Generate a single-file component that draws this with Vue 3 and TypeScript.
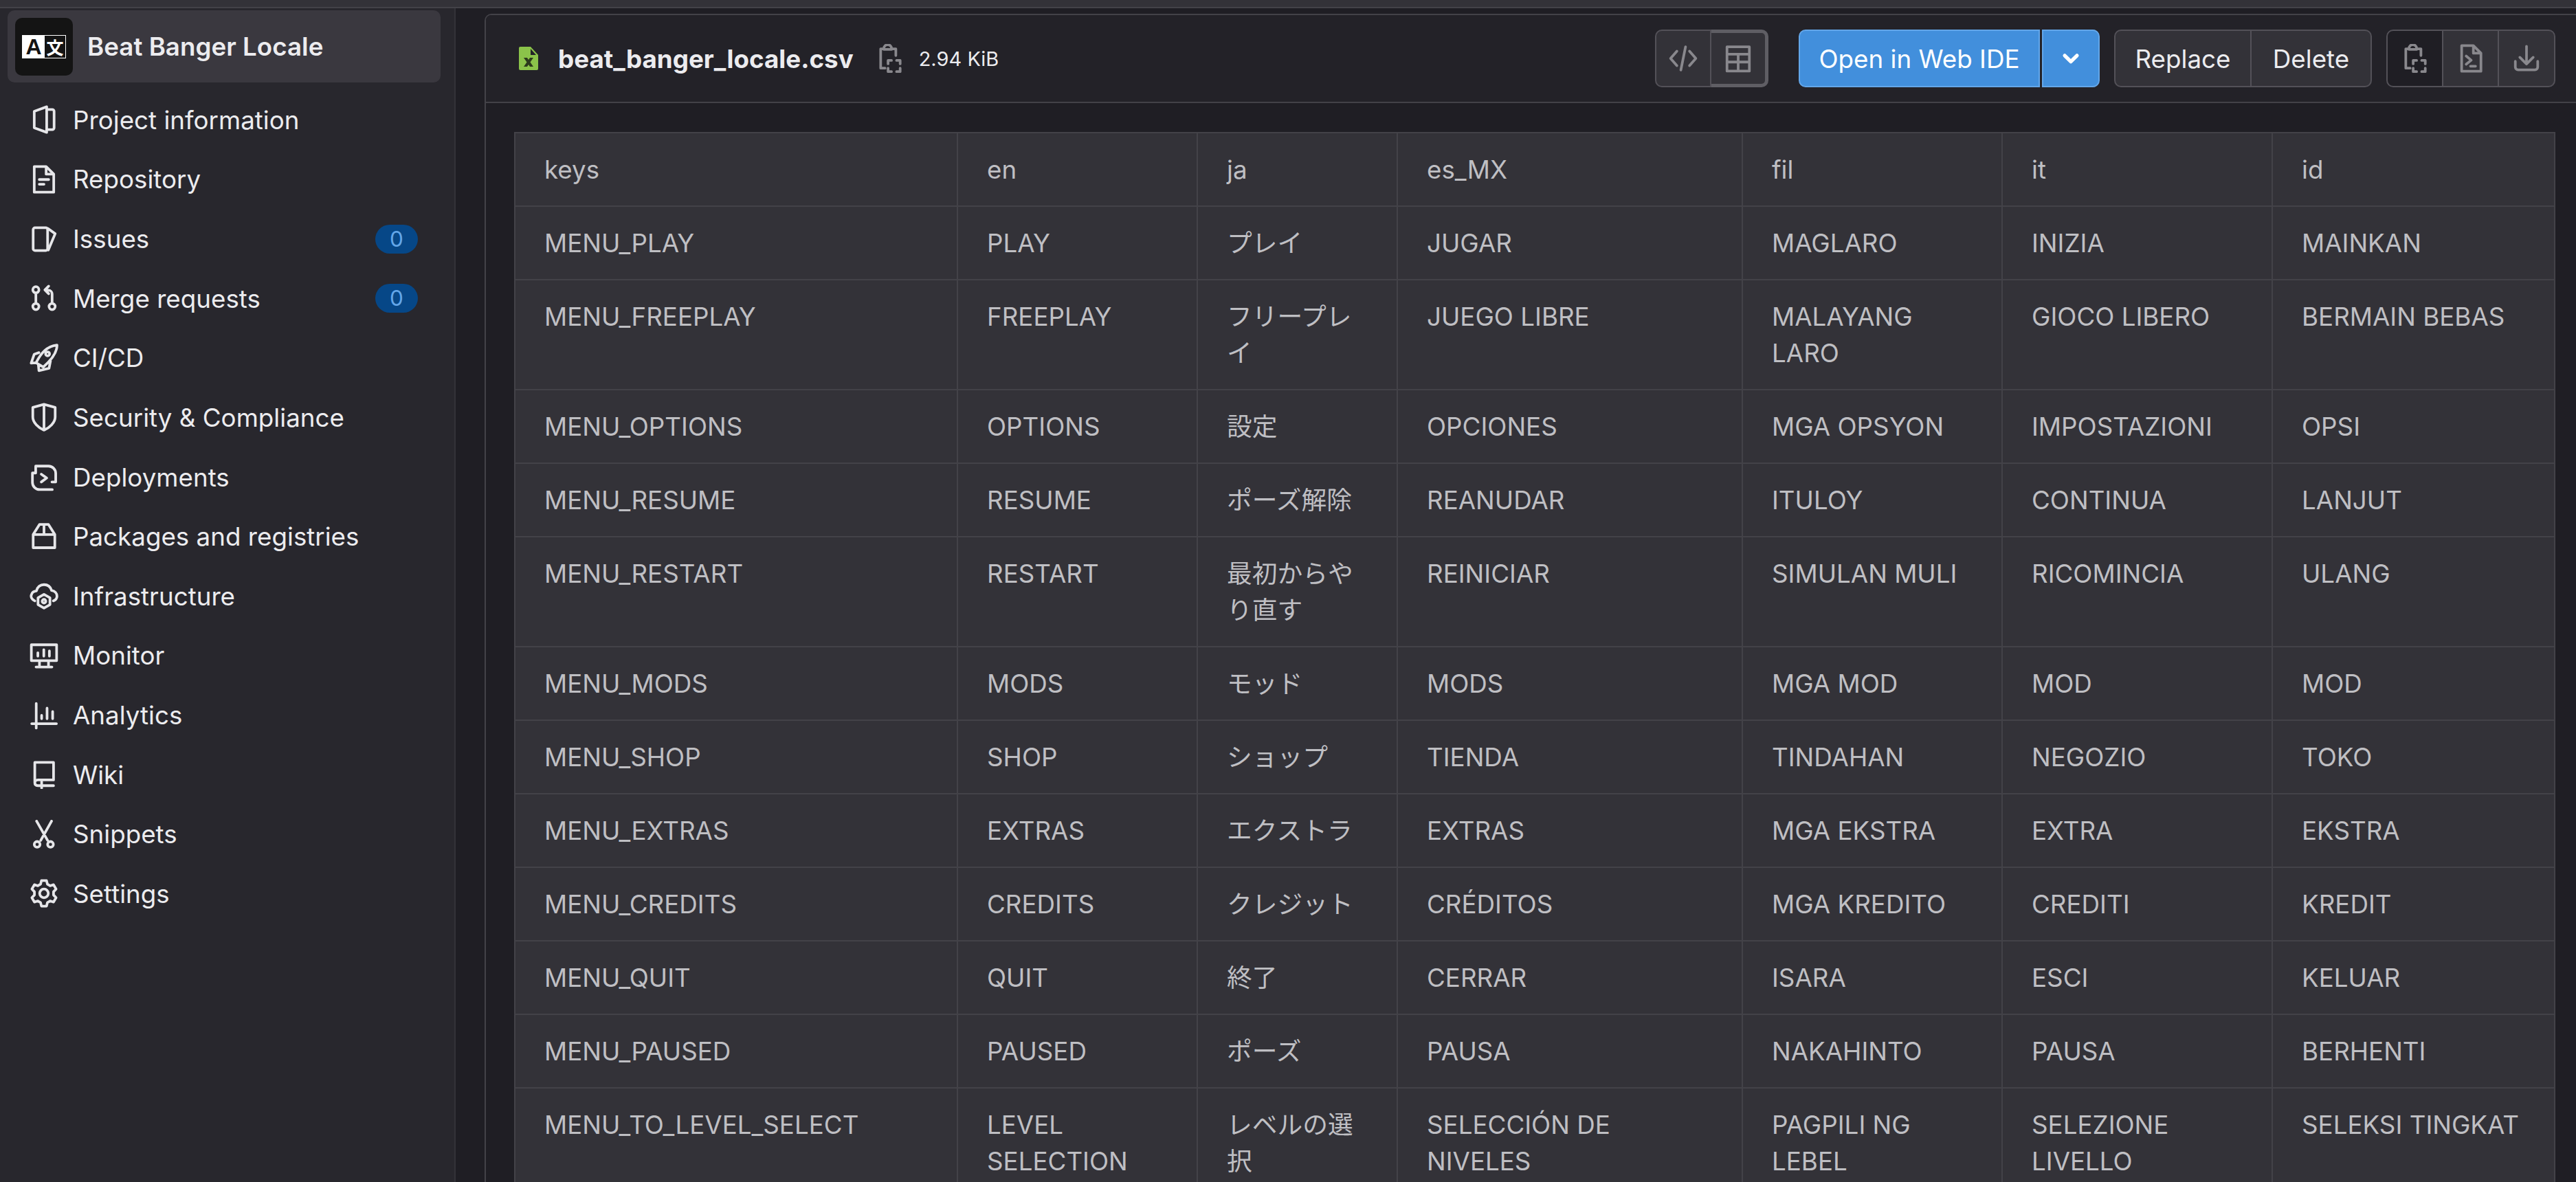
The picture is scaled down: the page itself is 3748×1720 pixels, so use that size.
<script setup lang="ts">
interface NavItem { label: string; d: string; badge?: string }

const circle = (x: number, y: number, r: number): string =>
  `M${x - r} ${y}a${r} ${r} 0 1 0 ${2 * r} 0a${r} ${r} 0 1 0 ${-2 * r} 0`

const nav: NavItem[] = [
  { label: 'Project information', d: 'M2.6 3.4L9.5.9V15.1L2.6 12.6ZM9.5 2.4H12.6a1 1 0 0 1 1 1V12.6a1 1 0 0 1-1 1H9.5' },
  { label: 'Repository', d: 'M2.6.9H9.2L13.4 5.1V15.1H2.6ZM9.2.9V5.1H13.4M5.4 8.1H10.6M5.4 10.7H8' },
  { label: 'Issues', d: 'M3 1.7H9a1 1 0 0 1 1 1V13.3a1 1 0 0 1-1 1H3a1 1 0 0 1-1-1V2.7a1 1 0 0 1 1-1ZM10.2 2.1L14.2 5L10.4 14', badge: '0' },
  { label: 'Merge requests', d: `${circle(3.5, 3.3, 1.7)}${circle(3.5, 12.6, 1.7)}${circle(12.5, 12.6, 1.7)}M3.5 5V10.9M12.5 10.9V5.6a2 2 0 0 0-2-2H8.8M10.6 1.3L8.5 3.4L10.6 5.5`, badge: '0' },
  { label: 'CI/CD', d: `M15.2.8C15.3 4 13.8 7.6 7.6 13L3.6 10.6C6.5 5 9.6 1.5 15.2.8Z${circle(10, 5.7, 1.1)}M5.2 5L2.6 5.9L.9 10.8L3.4 10.6M4.9 11.9L5.2 15L10.8 13.7L11.6 9.6` },
  { label: 'Security & Compliance', d: 'M8 .9L14.2 2.6V8C14.2 11 11 14 8 15.2C5 14 1.8 11 1.8 8V2.6ZM8 .9V15.2' },
  { label: 'Deployments', d: 'M3.4 5.8V2H10.5a4 4 0 0 1 4 4V10.8H12.4M3.4 5.8H1.6V11a4 4 0 0 0 4 4H12.6M6.5 6.5L9.5 8.6L6.5 10.8' },
  { label: 'Packages and registries', d: 'M2 6.8L5.5 1.2H10.5L14 6.8V14.1H2ZM2 6.8H14M8 1.2V6.8' },
  { label: 'Infrastructure', d: `M2.9 10.8C1.2 10 .6 8.6 1 7.5C1.4 6 2.5 5.4 3.8 5.3C4.3 3 6 1.8 8 1.8C10 1.8 11.6 3 12.2 5C14 5.3 15.2 6.5 15.2 8.2C15.2 9.4 14.5 10.3 13.2 10.8M8 7.2L11.3 9.1V12.9L8 14.8L4.7 12.9V9.1Z${circle(8, 11, 1)}` },
  { label: 'Monitor', d: 'M1 2H15V10.8H1ZM4.6 6.4V8.3M7.9 4.7V8.3M11 5.4V8.3M5.5 11V14M10.5 11V14M3.6 14.3H12.4' },
  { label: 'Analytics', d: 'M3.7 1.4V15M1.2 12.6H14.9M6.7 8V9.8M9.7 4V9.8M12.8 5.9V9.8' },
  { label: 'Wiki', d: 'M2.9 1.3H13.3V11H4.6C3.5 11 2.9 11.7 2.9 12.6C2.9 13.6 3.5 14.2 4.6 14.2H13.3M2.9 1.3V12.6M6.7 12V15.5' },
  { label: 'Snippets', d: `${circle(4.2, 13.6, 1.6)}${circle(11.6, 13.6, 1.6)}M3.9.7L10 11.4M12.2.7L6.2 11.4` },
  { label: 'Settings', d: `M6.6.9H9.4L9.9 2.9L11.4 3.8L13.3 3.2L14.7 5.6L13.3 7.1V8.9L14.7 10.4L13.3 12.8L11.4 12.2L9.9 13.1L9.4 15.1H6.6L6.1 13.1L4.6 12.2L2.7 12.8L1.3 10.4L2.7 8.9V7.1L1.3 5.6L2.7 3.2L4.6 3.8L6.1 2.9Z${circle(8, 8, 2.4)}` },
]

const clipboard = 'M4.8 2.7H2.8V13.4H5.2M8.6 2.7H11.2V6.4M4.6 3V2.5a2.1 2.1 0 0 1 4.2 0V3ZM6.9 11V9.1H8.8M11.6 9.1H13.6V11M13.6 13.4V15.3H11.6M8.8 15.3H6.9V13.4'

const rows: string[][] = [
  ['keys', 'en', 'ja', 'es_MX', 'fil', 'it', 'id'],
  ['MENU_PLAY', 'PLAY', 'プレイ', 'JUGAR', 'MAGLARO', 'INIZIA', 'MAINKAN'],
  ['MENU_FREEPLAY', 'FREEPLAY', 'フリープレイ', 'JUEGO LIBRE', 'MALAYANG LARO', 'GIOCO LIBERO', 'BERMAIN BEBAS'],
  ['MENU_OPTIONS', 'OPTIONS', '設定', 'OPCIONES', 'MGA OPSYON', 'IMPOSTAZIONI', 'OPSI'],
  ['MENU_RESUME', 'RESUME', 'ポーズ解除', 'REANUDAR', 'ITULOY', 'CONTINUA', 'LANJUT'],
  ['MENU_RESTART', 'RESTART', '最初からやり直す', 'REINICIAR', 'SIMULAN MULI', 'RICOMINCIA', 'ULANG'],
  ['MENU_MODS', 'MODS', 'モッド', 'MODS', 'MGA MOD', 'MOD', 'MOD'],
  ['MENU_SHOP', 'SHOP', 'ショップ', 'TIENDA', 'TINDAHAN', 'NEGOZIO', 'TOKO'],
  ['MENU_EXTRAS', 'EXTRAS', 'エクストラ', 'EXTRAS', 'MGA EKSTRA', 'EXTRA', 'EKSTRA'],
  ['MENU_CREDITS', 'CREDITS', 'クレジット', 'CRÉDITOS', 'MGA KREDITO', 'CREDITI', 'KREDIT'],
  ['MENU_QUIT', 'QUIT', '終了', 'CERRAR', 'ISARA', 'ESCI', 'KELUAR'],
  ['MENU_PAUSED', 'PAUSED', 'ポーズ', 'PAUSA', 'NAKAHINTO', 'PAUSA', 'BERHENTI'],
  ['MENU_TO_LEVEL_SELECT', 'LEVEL SELECTION', 'レベルの選択', 'SELECCIÓN DE NIVELES', 'PAGPILI NG LEBEL', 'SELEZIONE LIVELLO', 'SELEKSI TINGKAT'],
]
</script>

<template>
  <div class="page">
    <div class="topbar"></div>
    <div class="body">
      <aside class="sidebar">
        <div class="context">
          <div class="avatar">
            <div class="translate">
              <span class="tr-a">A</span>
              <span class="tr-b">文</span>
            </div>
          </div>
          <span class="context-name">Beat Banger Locale</span>
        </div>
        <nav class="nav">
          <div v-for="item in nav" :key="item.label" class="nav-item">
            <svg class="icon" viewBox="0 0 16 16"><path :d="item.d" /></svg>
            <span class="nav-label">{{ item.label }}</span>
            <span v-if="item.badge" class="badge">{{ item.badge }}</span>
          </div>
        </nav>
      </aside>

      <main class="main">
        <section class="card">
          <header class="card-head">
            <svg class="file-icon" viewBox="0 0 28 34">
              <path class="file-shape" d="M2 0H17L28 12V32a2 2 0 0 1-2 2H2a2 2 0 0 1-2-2V2a2 2 0 0 1 2-2Z" />
              <path class="file-fold" d="M17 3V12H25Z" />
              <path class="file-x" d="M7 16H12L14 19L16 16H21L16.5 22.5L21 29H16L14 26L12 29H7L11.5 22.5Z" />
            </svg>
            <span class="file-name">beat_banger_locale.csv</span>
            <svg class="icon icon-muted copy-icon" viewBox="0 0 16 16"><path :d="clipboard" /></svg>
            <span class="file-size">2.94 KiB</span>

            <div class="actions">
              <div class="btn-group">
                <button class="btn btn-icon btn-code">
                  <svg class="icon icon-muted" viewBox="0 0 16 16"><path d="M4.5 4L1 8L4.5 12M11.5 4L15 8L11.5 12M9.3 1.6L6.7 14.4" /></svg>
                </button>
                <button class="btn btn-icon btn-table">
                  <svg class="icon icon-muted" viewBox="0 0 16 16"><path d="M1.8 1.6H14.2V15H1.8ZM1.8 5.7H14.2M1.8 10H14.2M8 5.7V15" /></svg>
                </button>
              </div>
              <div class="ide-group">
                <button class="btn-primary btn-ide">Open in Web IDE</button>
                <button class="btn-primary btn-caret">
                  <svg class="icon icon-white" viewBox="0 0 16 16"><path d="M4.6 6.4L8 9.8L11.4 6.4" /></svg>
                </button>
              </div>
              <div class="btn-group">
                <button class="btn btn-text btn-replace">Replace</button>
                <button class="btn btn-text btn-delete">Delete</button>
              </div>
              <div class="btn-group">
                <button class="btn btn-icon btn-copy">
                  <svg class="icon icon-muted" viewBox="0 0 16 16"><path :d="clipboard" /></svg>
                </button>
                <button class="btn btn-icon btn-raw">
                  <svg class="icon icon-muted" viewBox="0 0 16 16"><path d="M2.9.9H9.4L13.6 5.1V15.1H2.9ZM9.4.9V5.1H13.6M5.4 6.7L8.2 9L5.4 11.2M7.8 12.3H10.6" /></svg>
                </button>
                <button class="btn btn-icon btn-download">
                  <svg class="icon icon-muted" viewBox="0 0 16 16"><path d="M8 1.3V11M4.3 7.4L8 11.1L11.7 7.4M1.8 9.6V12.8a1.5 1.5 0 0 0 1.5 1.5H12.7a1.5 1.5 0 0 0 1.5-1.5V9.6" /></svg>
                </button>
              </div>
            </div>
          </header>

          <div class="card-body">
            <table class="csv">
              <colgroup>
                <col v-for="n in 7" :key="n" />
              </colgroup>
              <tbody>
                <tr v-for="(row, r) in rows" :key="r">
                  <td v-for="(cell, c) in row" :key="c">{{ cell }}</td>
                </tr>
              </tbody>
            </table>
          </div>
        </section>
      </main>
    </div>
  </div>
</template>

<style>
html, body { margin: 0; background: #1f1e24; }
</style>

<style scoped>
.page {
  width: 3748px;
  height: 1720px;
  overflow: hidden;
  display: flex;
  flex-direction: column;
  background: #1f1e24;
  color: #ececef;
  font-family: "Inter", "Noto Sans CJK JP", sans-serif;
  font-size: 36.75px;
}
.topbar {
  flex: none;
  height: 10px;
  background: #333238;
  border-bottom: 2px solid #434248;
}
.body { flex: 1; display: flex; min-height: 0; }

.sidebar {
  flex: none;
  width: 661px;
  padding-top: 3px;
  background: #28272d;
  border-right: 2px solid #333238;
}
.context {
  display: flex;
  align-items: center;
  gap: 21px;
  width: 630px;
  height: 105px;
  margin: 0 0 11px 11px;
  padding-left: 11px;
  box-sizing: border-box;
  background: #3a383f;
  border-radius: 10px;
}
.avatar {
  flex: none;
  width: 84px;
  height: 84px;
  border-radius: 10px;
  background: #141414;
  display: flex;
  align-items: center;
  justify-content: center;
}
.translate {
  display: flex;
  width: 64px;
  height: 34px;
  box-sizing: border-box;
  border: 1px solid #fff;
  font-weight: 700;
  line-height: 32px;
  text-align: center;
}
.tr-a {
  width: 32px;
  background: #fff;
  color: #141414;
  font-family: "Liberation Sans", sans-serif;
  font-size: 32px;
}
.tr-b {
  width: 30px;
  background: #141414;
  color: #fff;
  font-family: "Noto Sans CJK JP", sans-serif;
  font-size: 25px;
}
.context-name { font-weight: 600; color: #ececef; font-size: 36.75px; }

.nav-item {
  display: flex;
  align-items: center;
  height: 86.625px;
  padding: 0 53px 0 43px;
}
.icon {
  flex: none;
  width: 42px;
  height: 42px;
  display: block;
  fill: none;
  stroke: #e6e6e9;
  stroke-width: 1.45;
  stroke-linecap: round;
  stroke-linejoin: round;
}
.icon-muted { stroke: #89888d; }
.icon-white { stroke: #fff; stroke-width: 2; }
.nav-label { margin-left: 21px; }
.badge {
  margin-left: auto;
  width: 62px;
  height: 42px;
  border-radius: 21px;
  background: #064787;
  color: #63a6e9;
  font-size: 31.5px;
  line-height: 42px;
  text-align: center;
}

.main { flex: 1; min-width: 0; padding: 8px 0 0 42px; }
.card {
  height: 100%;
  box-sizing: border-box;
  border-top: 2px solid #434248;
  border-left: 2px solid #434248;
  border-top-left-radius: 10px;
}
.card-head {
  display: flex;
  align-items: center;
  height: 128px;
  box-sizing: border-box;
  padding: 0 30px 0 48px;
  background: #232228;
  border-bottom: 2px solid #434248;
  border-top-left-radius: 8px;
}
.file-icon { flex: none; width: 28px; height: 34px; display: block; }
.file-shape { fill: #8bc34a; }
.file-fold { fill: #232228; }
.file-x { fill: #2c3a1c; }
.file-name { margin-left: 29px; font-weight: 700; }
.copy-icon { margin-left: 32px; }
.file-size { margin-left: 21px; font-size: 29px; }

.actions { margin-left: auto; display: flex; gap: 21px; align-items: center; }
.btn-group { display: flex; height: 84px; }
.btn {
  height: 84px;
  box-sizing: border-box;
  padding: 0;
  display: flex;
  align-items: center;
  justify-content: center;
  background: #333238;
  border: 2px solid #535158;
  color: #ececef;
  font: inherit;
}
.btn + .btn { border-left: 0; }
.btn-group .btn:first-child { border-radius: 10px 0 0 10px; }
.btn-group .btn:last-child { border-radius: 0 10px 10px 0; }
.btn-code { width: 82px; }
.btn-table { width: 83px; border: 5px solid #5f5e64; border-left-width: 5px !important; }
.btn-replace { width: 200px; }
.btn-delete { width: 175px; }
.btn-copy { width: 83px; background: #1f1e24; }
.btn-raw { width: 81px; }
.btn-download { width: 82px; }

.ide-group { display: flex; gap: 3px; margin: 0 0 0 23px; }
.btn-primary {
  height: 84px;
  box-sizing: border-box;
  padding: 0;
  display: flex;
  align-items: center;
  justify-content: center;
  background: #428fdc;
  border: 2px solid #63a6e9;
  color: #fff;
  font: inherit;
}
.btn-ide { width: 351px; border-radius: 10px 0 0 10px; }
.btn-caret { width: 84px; border-radius: 0 10px 10px 0; }

.card-body { padding: 42px 0 0 41px; }
.csv {
  table-layout: fixed;
  width: 2968px;
  border-collapse: collapse;
  background: #333238;
  color: #bfbfc3;
}
.csv col:nth-child(1) { width: 644px; }
.csv col:nth-child(2) { width: 349px; }
.csv col:nth-child(3) { width: 291px; }
.csv col:nth-child(4) { width: 502px; }
.csv col:nth-child(5) { width: 378px; }
.csv col:nth-child(6) { width: 393px; }
.csv col:nth-child(7) { width: 411px; }
.csv td {
  border: 2px solid #434248;
  padding: 26px 42px;
  line-height: 53px;
  vertical-align: top;
}
</style>
